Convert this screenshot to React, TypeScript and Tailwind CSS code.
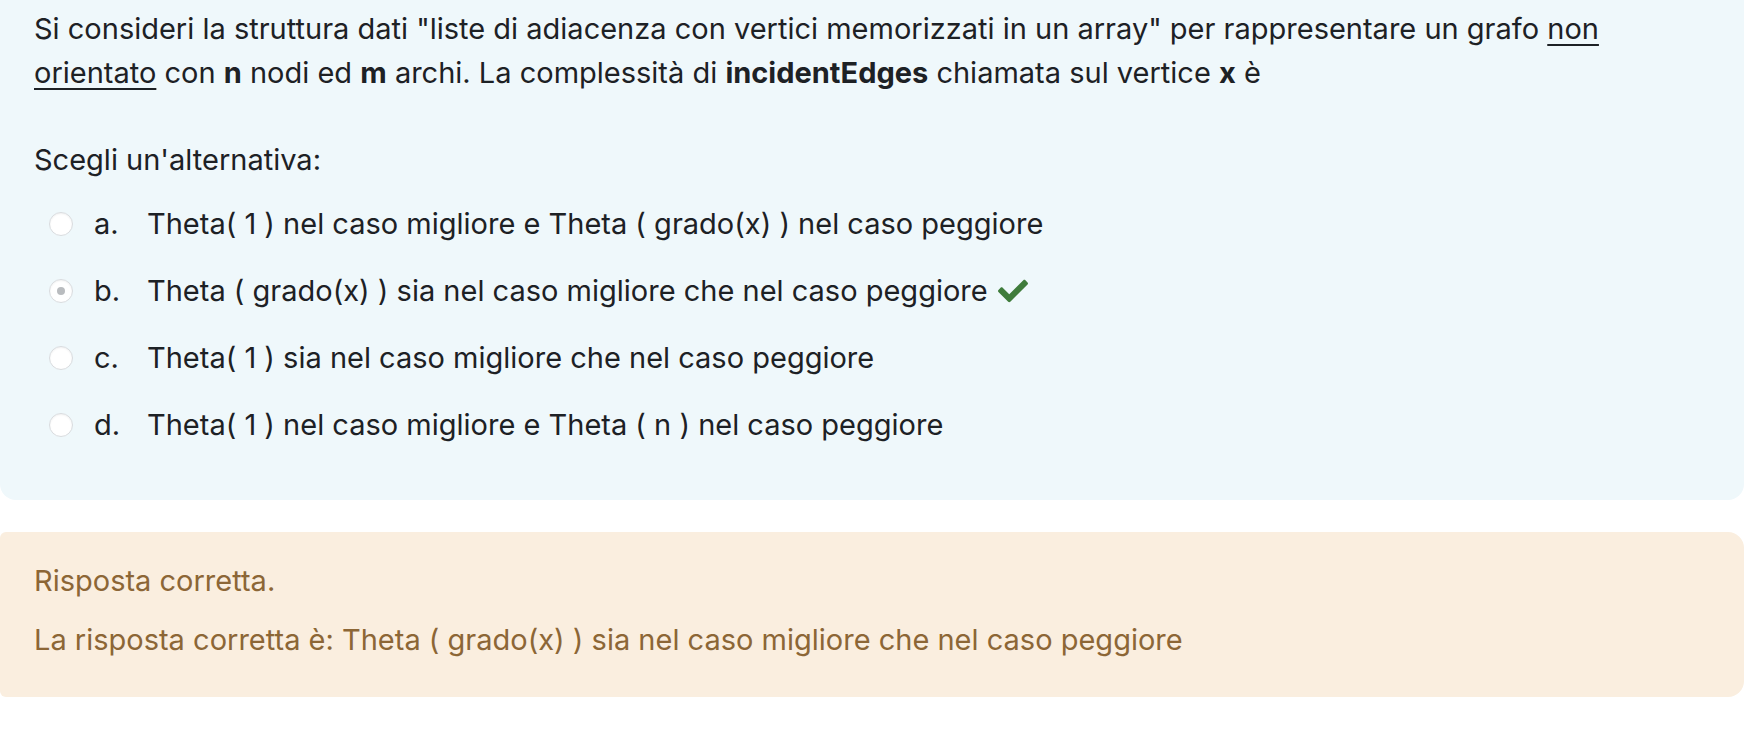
import React from 'react';
import { FaCheck } from 'react-icons/fa';

const options = [
  { letter: 'a.', text: 'Theta( 1 ) nel caso migliore e Theta ( grado(x) ) nel caso peggiore', checked: false },
  { letter: 'b.', text: 'Theta ( grado(x) ) sia nel caso migliore che nel caso peggiore', checked: true },
  { letter: 'c.', text: 'Theta( 1 ) sia nel caso migliore che nel caso peggiore', checked: false },
  { letter: 'd.', text: 'Theta( 1 ) nel caso migliore e Theta ( n ) nel caso peggiore', checked: false },
];

function Radio({ checked }: { checked: boolean }) {
  return (
    <span className="w-[24px] h-[24px] rounded-full border border-[#d9dcdf] bg-white shadow-[inset_0_1px_2px_rgba(0,0,0,0.06)] flex items-center justify-center shrink-0">
      {checked && <span className="w-[8px] h-[8px] rounded-full bg-[#b9bcbf]" />}
    </span>
  );
}

export default function App() {
  return (
    <div className="w-[1754px] h-[744px] bg-white font-['Inter',sans-serif] text-[29px] leading-[45px] text-[#1d2125]">
      {/* Question */}
      <div className="w-[1744px] bg-[#eff8fb] rounded-b-2xl pl-[34px] pr-[40px] pt-[7px] pb-[53px]">
        <p className="leading-[44px]">
          Si consideri la struttura dati "liste di adiacenza con vertici memorizzati in un array" per rappresentare un grafo{' '}
          <span className="underline underline-offset-[5px] decoration-[1.5px]">non</span>{' '}
          <span className="underline underline-offset-[5px] decoration-[1.5px]">orientato</span> con <b>n</b> nodi ed{' '}
          <b>m</b> archi. La complessità di <b>incidentEdges</b> chiamata sul vertice <b>x</b> è
        </p>
        <p className="mt-[42px]">Scegli un'alternativa:</p>
        <div className="mt-[19px] flex flex-col gap-[22px]">
          {options.map((o) => (
            <div key={o.letter} className="flex items-center pl-[15px]">
              <Radio checked={o.checked} />
              <span className="ml-[21px] w-[53px]">{o.letter}</span>
              <span>{o.text}</span>
              {o.checked && <FaCheck className="ml-[10px] text-[#3f7c3b] w-[30px] h-[30px]" />}
            </div>
          ))}
        </div>
      </div>

      {/* Feedback */}
      <div className="w-[1744px] mt-[32px] bg-[#faeedf] rounded-r-2xl rounded-l-md pl-[34px] pt-[26px] pb-[35px] text-[#8c6636]">
        <p>Risposta corretta.</p>
        <p className="mt-[14px]">La risposta corretta è: Theta ( grado(x) ) sia nel caso migliore che nel caso peggiore</p>
      </div>
    </div>
  );
}
